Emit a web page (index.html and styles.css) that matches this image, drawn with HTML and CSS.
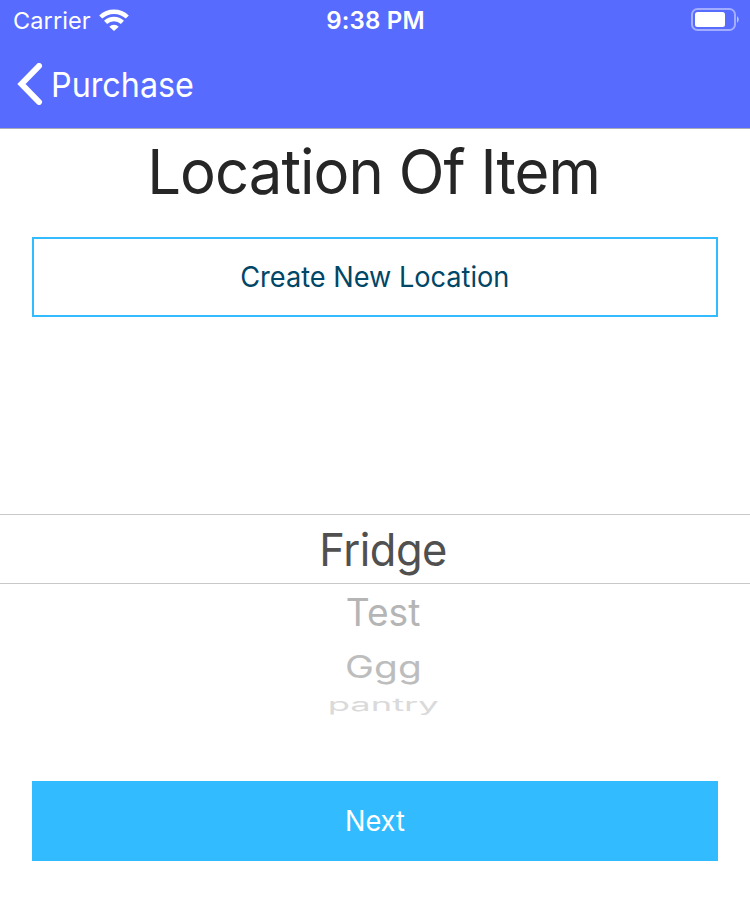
FILE: index.html
```html
<!DOCTYPE html>
<html lang="en">
<head>
<meta charset="utf-8">
<title>Location Of Item</title>
<link rel="stylesheet" href="styles.css">
</head>
<body>
<header class="top">
  <div class="status">
    <div class="carrier"><span class="carrier-name">Carrier</span>
      <svg class="wifi" width="30" height="22" viewBox="0 0 30 22" fill="none" stroke="#fff" stroke-width="4.400"><path d="M1.700 8a19.300 19.300 0 0 1 26.600 0M6.600 13.400a12 12 0 0 1 16.800 0"/><path d="M15 22l-4.700-4.300a6.800 6.800 0 0 1 9.400 0z" fill="#fff" stroke="none"/></svg>
    </div>
    <div class="time">9:38 PM</div>
    <svg class="battery" width="49" height="24" viewBox="0 0 49 24"><rect x="1" y="1" width="43" height="21" rx="5.500" fill="none" stroke="#fff" stroke-opacity=".45" stroke-width="2"/><rect x="4" y="4" width="30" height="15" rx="2.500" fill="#fff"/><path d="M46 8q3.500 3.500 0 7z" fill="#fff" fill-opacity=".6"/></svg>
  </div>
  <nav class="nav">
    <svg width="26" height="42" viewBox="0 0 26 42" fill="none" stroke="#fff" stroke-width="6" stroke-linecap="round" stroke-linejoin="miter"><path d="M22 3L4.500 21l17.500 18"/></svg>
    <span class="back">Purchase</span>
  </nav>
</header>
<main>
  <h1><span>Location Of Item</span></h1>
  <button class="btn outline"><span>Create New Location</span></button>
  <div class="picker">
    <div class="row selected"><span>Fridge</span></div>
    <div class="row test"><span>Test</span></div>
    <div class="row ggg"><span>Ggg</span></div>
    <div class="row pantry"><span>pantry</span></div>
  </div>
  <button class="btn solid"><span>Next</span></button>
</main>
</body>
</html>
```
FILE: styles.css
```css
* { box-sizing: border-box; }
body { margin: 0; height: 902px; overflow: hidden; background: #fff; font-family: Inter, "Liberation Sans", sans-serif; }
span { display: inline-block; white-space: nowrap; }
.top { height: 129px; background: #576bff; color: #fff; border-bottom: 1px solid #a9abb8; }
.status { height: 40px; padding: 0 10px 1px 12px; display: grid; grid-template-columns: 1fr auto 1fr; align-items: center; font-size: 24px; line-height: 38px; }
.carrier { display: flex; align-items: center; gap: 8px; padding-left: 1px; }
.carrier-name { padding-top: 2px; font-size: 23.5px; font-weight: 370; letter-spacing: .1px; }
.time { margin-left: -1px; padding-top: 2px; font-weight: 600; letter-spacing: .2px; }
.battery { justify-self: end; }
.nav { height: 88px; padding-left: 17px; display: flex; align-items: center; gap: 8px; font-size: 34px; font-weight: 370; }
.back { transform: scaleX(.95); transform-origin: left; }
h1 { margin: 0; height: 108px; padding: 3px 2px 0 0; text-align: center; font-size: 62px; line-height: 80px; font-weight: 400; letter-spacing: -1px; color: #262626; }
h1 span { transform: scaleX(.965); }
.btn { display: block; width: 686px; height: 80px; margin: 0 32px; padding: 0; border: 0; border-radius: 0; font: 28px Inter, sans-serif; }
.btn span { transform: scaleX(.97); }
.outline { border: 2px solid #33bbff; background: #fff; color: #004666; }
.picker { height: 464px; padding: 197px 0 0; text-align: center; }
.row { display: flex; justify-content: center; align-items: center; padding-left: 16px; font-size: 42px; line-height: 1; }
.selected { height: 70px; border: solid #c8c8c8; border-width: 1px 0; color: #505050; font-size: 45px; letter-spacing: -.5px; }
.selected span { transform: scaleX(.965); }
.test { height: 58px; color: #b5b5b5; }
.test span { transform: scale(.885, .9); }
.ggg { height: 49px; color: #bdbdbd; }
.ggg span { transform: scale(.925, .735); }
.pantry { height: 27px; color: #dadada; }
.pantry span { transform: scale(.865, .43); }
.solid { background: #33bbff; color: #fff; font-weight: 370; }
```
